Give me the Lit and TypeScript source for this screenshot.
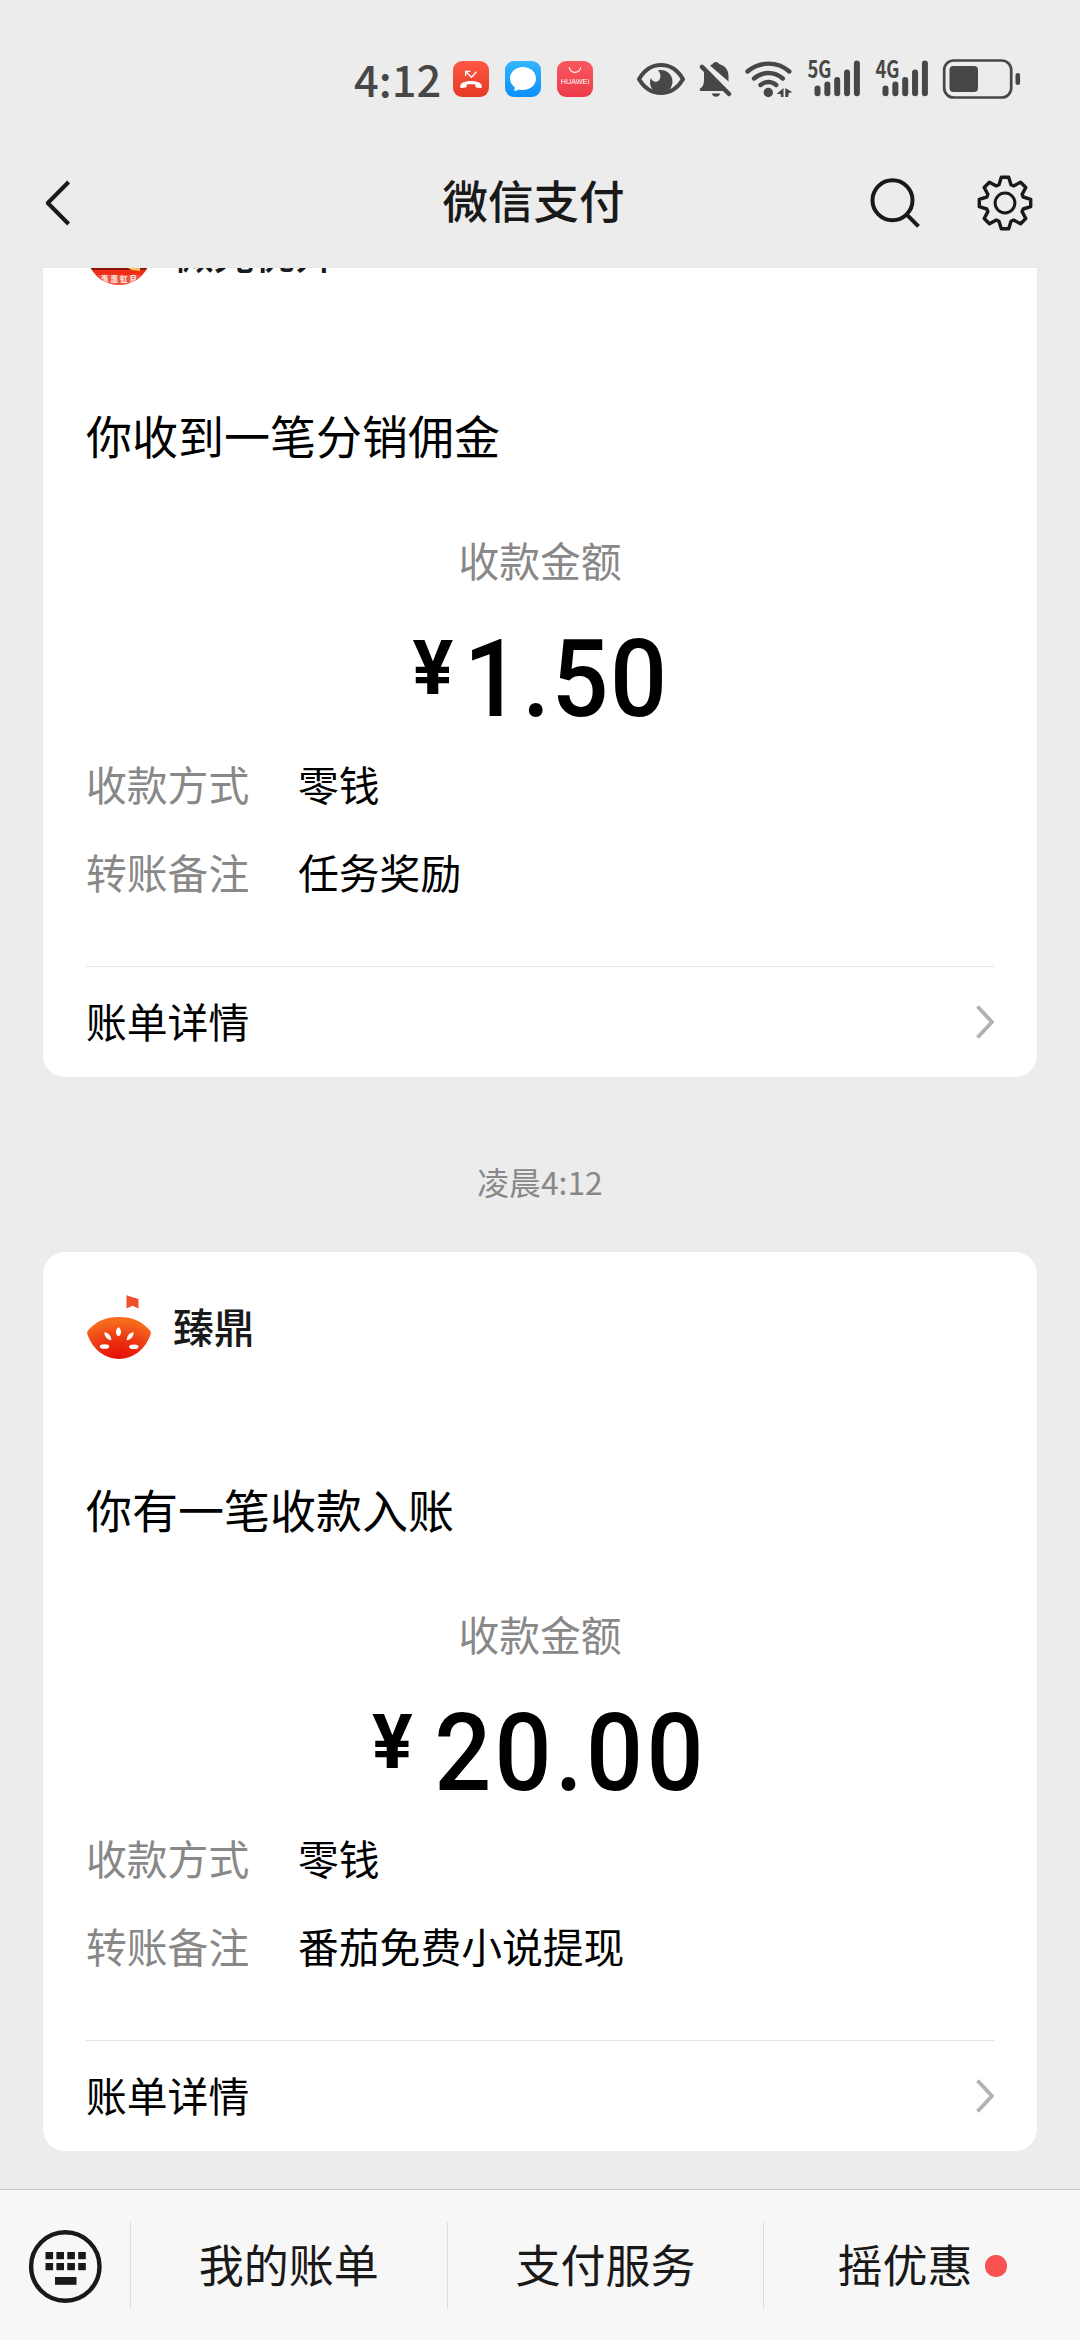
import { LitElement, html, svg, css } from "lit";
import { customElement, property } from "lit/decorators.js";
import { classMap } from "lit/directives/class-map.js";

const sans = css`"Noto Sans CJK SC", "Noto Sans", sans-serif`;

interface Bill {
  logo: "badge" | "tomato";
  merchant: string;
  title: string;
  amount: string;
  remark: string;
}

const gearPath = (() => {
  const tooth = [[-6, -18.2], [-3.7, -25.7], [3.7, -25.7], [6, -18.2]];
  const pts: string[] = [];
  for (let i = 0; i < 8; i++) {
    const a = (i * Math.PI) / 4;
    for (const [x, y] of tooth) {
      const px = x * Math.cos(a) - y * Math.sin(a);
      const py = x * Math.sin(a) + y * Math.cos(a);
      pts.push(`${px.toFixed(2)} ${py.toFixed(2)}`);
    }
  }
  return `M${pts.join("L")}Z`;
})();

@customElement("signal-bars")
class SignalBars extends LitElement {
  @property() net = "5G";
  static styles = css`
    :host { display: block; width: 54px; height: 40px; }
    svg { display: block; overflow: visible; }
    text { font: 700 24px "Noto Sans CJK SC", sans-serif; fill: #474747; }
  `;
  render() {
    const tops = [26.5, 22.5, 18, 10.5, 1.5];
    return html`<svg width="54" height="40" viewBox="0 0 54 40">
      <text x="0.5" y="19" textLength="24" lengthAdjust="spacingAndGlyphs">${this.net}</text>
      ${tops.map((t, i) => svg`<rect x=${7.5 + i * 9.85} y=${t} width="6" height=${37.3 - t} rx="3" fill="#474747"/>`)}
    </svg>`;
  }
}

@customElement("status-bar")
class StatusBar extends LitElement {
  static styles = css`
    :host { display: flex; align-items: center; height: 58px; padding: 50px 0 0 354px; }
    svg, signal-bars { display: block; flex: none; }
    .clock { width: 99px; font: 500 43.4px/58px ${sans}; color: #474747; transform: translateY(-1.5px); }
    .call, .chat { margin-right: 16px; }
    .store { margin-right: 44px; }
    .store text { font: 500 6.6px "Liberation Sans", sans-serif; fill: #fff; }
    .eye { margin-right: 14px; }
    .bell { margin-right: 13px; }
    .wifi { margin-right: 15px; }
    .sig5 { margin-right: 14px; }
    .sig4 { margin-right: 13px; }
  `;
  render() {
    return html`
      <div class="clock">4:12</div>
      <svg class="call" width="36" height="36" viewBox="0 0 36 36">
        <defs><linearGradient id="r" x1="0" y1="0" x2="0" y2="1"><stop offset="0" stop-color="#fd5844"/><stop offset="1" stop-color="#e53a24"/></linearGradient></defs>
        <rect width="36" height="36" rx="9" fill="url(#r)"/>
        <path d="M7.200 26.200C6.600 22.200 11.300 20 18 20s11.400 2.200 10.800 6.200c-.1.700-.6 1-1.200.9l-4.300-.6c-.6-.1-.9-.5-.9-1.100V23.600c-2.600-.5-6.200-.5-8.800 0v1.800c0 .6-.3 1-.9 1.100l-4.300.6c-.6.1-1.100-.2-1.200-.9z" fill="#fff"/>
        <path d="M12.600 15V10.300H17.300M13 10.700l5.500 5.500 5-5.500" fill="none" stroke="#fff" stroke-width="1.300"/>
      </svg>
      <svg class="chat" width="36" height="36" viewBox="0 0 36 36">
        <defs><linearGradient id="b" x1="0" y1="0" x2="0" y2="1"><stop offset="0" stop-color="#35b5fc"/><stop offset="1" stop-color="#0a90fb"/></linearGradient></defs>
        <rect width="36" height="36" rx="9" fill="url(#b)"/>
        <path d="M18 6c7.400 0 13 5 13 11.500S25.400 29 18 29c-1.500 0-2.800-.2-4-.6-1.500 1-3.300 1.500-5.200 1.400.8-1 1.100-2.200.8-3.700C6.700 24 5 21 5 17.500 5 11 10.600 6 18 6z" fill="#fff"/>
      </svg>
      <svg class="store" width="36" height="36" viewBox="0 0 36 36">
        <defs><linearGradient id="h" x1="0" y1="0" x2="0" y2="1"><stop offset="0" stop-color="#f95a5e"/><stop offset="1" stop-color="#ec3b4a"/></linearGradient></defs>
        <rect width="36" height="36" rx="9" fill="url(#h)"/>
        <path d="M12.300 6.200a5.700 5.200 0 0 0 11.400 0" fill="none" stroke="#fff" stroke-width="1.100"/>
        <text x="3.700" y="23" textLength="28.800" lengthAdjust="spacingAndGlyphs">HUAWEI</text>
      </svg>
      <svg class="eye" width="48" height="36" viewBox="0 0 48 36">
        <path d="M2 18.200C7 9.500 14.500 4 24 4s17 5.500 22 14.200C41 26.500 33.500 32 24 32S7 26.500 2 18.200z" fill="none" stroke="#474747" stroke-width="4" stroke-linejoin="round"/>
        <path d="M21 9.200c6.500-1.600 14.500 2.800 14.500 11.300 0 6.500-5 11.500-11.500 11.500s-11-4.800-11-10.500c0-1.700.4-3.300 1-4.600 1 2.900 3.300 4.300 6 3.600 4.200-1.200 4.600-7.300 1-11.300z" fill="#474747"/>
      </svg>
      <svg class="bell" width="33" height="38" viewBox="0 0 33 38">
        <path d="M5 11.500 27.500 31H2c-1.500 0-1.800-1.900-.5-2.700 3-2 3.500-5.300 3.500-9.300z" fill="#474747"/>
        <path d="M11 5.500C12.300 4.600 13.500 4.200 13.700 4c.8-2.700 5.600-2.700 6.400 0C26 5.500 29.500 10 29.500 16v5.500z" fill="#474747"/>
        <path d="M3 6.800 30 34" stroke="#474747" stroke-width="4.500" stroke-linecap="round"/>
        <path d="M12.800 33.500h8.400a4.300 4 0 0 1-8.400 0z" fill="#474747"/>
      </svg>
      <svg class="wifi" width="47" height="38" viewBox="0 0 47 38">
        <g fill="none" stroke="#474747" stroke-width="4.400" stroke-linecap="round">
          <path d="M2.500 11.500C14.500 1 32.500 1 44.300 11.500"/>
          <path d="M9 18.500c8.500-7.300 20.300-7.300 28.800 0"/>
          <path d="M15.500 25c4.700-4 11-4 15.700 0"/>
        </g>
        <circle cx="23.300" cy="32.500" r="4.700" fill="#474747"/>
        <path d="M38.500 28v9h-2.700v-3h-4.300zM40.300 28l7 4.200-3.500.8-.8 4h-2.700z" fill="#474747"/>
      </svg>
      <signal-bars class="sig5" net="5G"></signal-bars>
      <signal-bars class="sig4" net="4G"></signal-bars>
      <svg width="79" height="40" viewBox="0 0 79 40">
        <rect x="2.200" y="1.500" width="67" height="37" rx="9.500" fill="none" stroke="#474747" stroke-width="2.700"/>
        <rect x="7.500" y="7" width="28.500" height="26" rx="4" fill="#474747"/>
        <rect x="73.500" y="14" width="4.600" height="12" rx="2.300" fill="#474747"/>
      </svg>
    `;
  }
}

@customElement("nav-bar")
class NavBar extends LitElement {
  static styles = css`
    :host { display: grid; grid-template-columns: 1fr auto 1fr; align-items: center; height: 128px; padding: 31px 46px 0 44px; }
    svg { display: block; flex: none; }
    h1 { margin: 0; font: 500 45.5px/66px ${sans}; color: #191919; transform: translate(-5.5px, -4px); }
    .actions { display: flex; justify-content: flex-end; align-items: center; gap: 54px; }
  `;
  render() {
    return html`
      <svg class="back" width="28" height="48" viewBox="0 0 28 48"><path d="M24.600 3 3.800 24 24.600 45" fill="none" stroke="#191919" stroke-width="4" stroke-linejoin="round"/></svg>
      <h1>微信支付</h1>
      <div class="actions">
        <svg width="54" height="56" viewBox="0 0 54 56"><circle cx="24.500" cy="25.300" r="20" fill="none" stroke="#191919" stroke-width="4"/><path d="M39 39.800 50.500 51.300" stroke="#191919" stroke-width="4"/></svg>
        <svg width="58" height="58" viewBox="-29 -29 58 58"><path d=${gearPath} fill="none" stroke="#191919" stroke-width="3.400" stroke-linejoin="round"/><circle r="9.900" fill="none" stroke="#191919" stroke-width="3"/></svg>
      </div>
    `;
  }
}

const tomatoLogo = html`<svg width="64" height="64" viewBox="0 0 64 64">
  <defs><radialGradient id="t" cx=".5" cy=".95" r=".85"><stop offset="0" stop-color="#e60f06"/><stop offset=".45" stop-color="#ea3012"/><stop offset="1" stop-color="#f76a1c"/></radialGradient></defs>
  <path d="M39.500 0C43 2 47.500 2.500 51.500 4V13.500L45.600 10.800 39.500 13.500z" fill="#f0512c"/>
  <path d="M1 35.500C9 26 19 22 32 22s23 4 31 13.500c1 1.500 1.100 2.800.5 4.300C58 55 46 64 32 64S6 55 .5 39.800C-.1 38.300 0 37 1 35.500z" fill="url(#t)"/>
  <g fill="#fff">
    <path d="M31.500 32c1.800 1.700 2.500 3.200 2.500 5 0 2.200-1 4-2.500 4S29 39.200 29 37c0-1.800.7-3.300 2.500-5z"/>
    <path d="M17.300 37.300c4 .4 6.800 3 7 8-3.600-.2-6.800-3.400-7-8z"/>
    <path d="M46.700 37.300c-4 .4-6.800 3-7 8 3.600-.2 6.800-3.400 7-8z"/>
    <ellipse cx="17.500" cy="51.500" rx="4.700" ry="2.300"/>
    <ellipse cx="46.800" cy="51.800" rx="4.700" ry="2.300"/>
  </g>
</svg>`;

const badgeLogo = html`<svg class="badge" width="64" height="64" viewBox="0 0 64 64">
  <defs><clipPath id="c"><circle cx="32" cy="32" r="32"/></clipPath></defs>
  <g clip-path="url(#c)">
    <rect width="64" height="64" fill="#ef2c17"/>
    <rect y="40" width="64" height="9" fill="#8e160c"/>
    <path d="M39 46h14v4l-8-1z" fill="#ffc453"/>
    <rect y="54" width="64" height="10" fill="#ee5644"/>
    <text x="14" y="60.500" textLength="36">惠惠虹良</text>
  </g>
</svg>`;

@customElement("bill-card")
class BillCard extends LitElement {
  @property({ attribute: false }) bill!: Bill;
  static styles = css`
    :host { display: flex; flex-direction: column; flex: none; box-sizing: border-box; height: 899px; padding: 43px 43px 0; background: #fff; border-radius: 22px; font: 400 40.8px/54px ${sans}; color: #000; }
    svg { display: block; flex: none; }
    .badge text { font: 900 7.5px ${sans}; fill: #ffe3dc; }
    .merchant { display: flex; align-items: center; gap: 22px; height: 64px; margin-left: 1px; }
    .name { font-weight: 500; color: #191919; transform: translateY(-1.5px); }
    .title { margin-top: 119px; margin-bottom: 1px; font-size: 46px; line-height: 60px; }
    .label { margin-top: 68px; text-align: center; color: #888; }
    .amount { display: flex; justify-content: center; margin-top: 37px; height: 109px; font: 500 108px/110px Roboto, sans-serif; }
    .yen { font-size: 76px; line-height: 89px; font-weight: 700; margin-right: 20px; }
    .digits { letter-spacing: 3.5px; margin: 0 -9px; transform: scaleX(0.93); }
    .digits.narrow { letter-spacing: 1.5px; margin-left: -17px; }
    .rows { margin-top: 6px; }
    .row { display: flex; height: 88px; line-height: 89px; }
    .key { width: 212px; color: #888; }
    .detail { display: flex; justify-content: space-between; align-items: center; margin-top: 51px; height: 110px; border-top: 1px solid #e5e5e5; }
    .detail span { transform: translateY(-1.5px); }
    .detail svg { margin-right: -1px; }
  `;
  render() {
    const b = this.bill;
    const digits = classMap({ digits: true, narrow: b.amount.startsWith("1") });
    return html`
      <div class="merchant">${b.logo === "tomato" ? tomatoLogo : badgeLogo}<span class="name">${b.merchant}</span></div>
      <div class="title">${b.title}</div>
      <div class="label">收款金额</div>
      <div class="amount"><span class="yen">¥</span><span class=${digits}>${b.amount}</span></div>
      <div class="rows">
        <div class="row"><span class="key">收款方式</span><span>零钱</span></div>
        <div class="row"><span class="key">转账备注</span><span>${b.remark}</span></div>
      </div>
      <div class="detail"><span>账单详情</span>
        <svg width="22" height="38" viewBox="0 0 22 38"><path d="M4.500 3.500 19 19 4.500 34.500" fill="none" stroke="#b2b2b2" stroke-width="3.800" stroke-linejoin="round"/></svg>
      </div>
    `;
  }
}

@customElement("menu-bar")
class MenuBar extends LitElement {
  static styles = css`
    :host { display: flex; align-items: center; height: 150px; border-top: 1px solid #c8c8c8; background: #f7f7f7; font: 400 45px/64px ${sans}; color: #191919; }
    svg { display: block; margin: 3px 28px 0; flex: none; }
    .item { flex: 1; display: flex; align-items: center; justify-content: center; height: 86px; border-left: 1px solid #dcdcdc; }
    .item span { transform: translateY(-1px); }
    .dot { width: 21.6px; height: 21.6px; margin: 2px 0 0 13px; border-radius: 50%; background: #fa5151; }
  `;
  render() {
    const keys = [0, 1, 2, 3];
    return html`
      <svg width="74" height="74" viewBox="0 0 74 74">
        <circle cx="37.300" cy="36.500" r="34.200" fill="none" stroke="#191919" stroke-width="4.400"/>
        ${keys.map((k) => svg`<rect x=${17.5 + k * 10.9} y="22" width="7.600" height="7.200" fill="#191919"/><rect x=${17.5 + k * 10.9} y="33" width="7.600" height="7.200" fill="#191919"/>`)}
        <rect x="27" y="47" width="21.500" height="7.800" fill="#191919"/>
      </svg>
      <div class="item"><span>我的账单</span></div>
      <div class="item"><span>支付服务</span></div>
      <div class="item"><span>摇优惠</span><i class="dot"></i></div>
    `;
  }
}

@customElement("app-root")
class AppRoot extends LitElement {
  static styles = css`
    :host { display: flex; flex-direction: column; width: 1080px; height: 2340px; overflow: hidden; background: #ececec; }
    .top { flex: none; height: 267px; border-bottom: 1px solid #e7e7e7; }
    .thread { flex: 1; min-height: 0; display: flex; flex-direction: column; justify-content: flex-end; overflow: hidden; padding: 0 43px 38px; }
    .time { flex: none; height: 175px; font: 400 31.8px/175px ${sans}; color: #888; text-align: center; }
    .time span { display: block; margin-top: 17px; }
  `;
  private bills: Bill[] = [
    { logo: "badge", merchant: "微光优升", title: "你收到一笔分销佣金", amount: "1.50", remark: "任务奖励" },
    { logo: "tomato", merchant: "臻鼎", title: "你有一笔收款入账", amount: "20.00", remark: "番茄免费小说提现" },
  ];
  render() {
    return html`
      <div class="top"><status-bar></status-bar><nav-bar></nav-bar></div>
      <div class="thread">
        <bill-card .bill=${this.bills[0]}></bill-card>
        <div class="time"><span>凌晨4:12</span></div>
        <bill-card .bill=${this.bills[1]}></bill-card>
      </div>
      <menu-bar></menu-bar>
    `;
  }
}
